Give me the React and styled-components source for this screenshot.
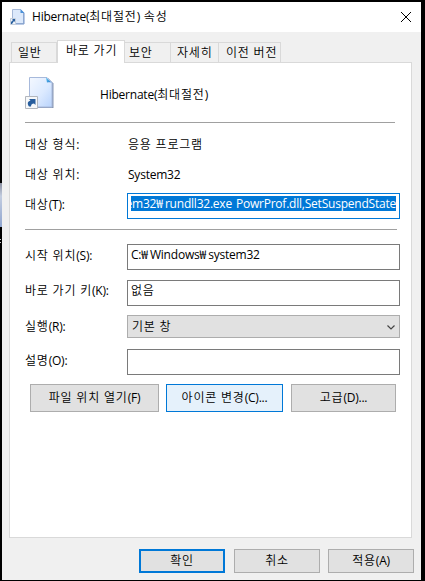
import React from "react";
import styled, { createGlobalStyle, css } from "styled-components";

const GlobalStyle = createGlobalStyle`
  *, *::before, *::after { box-sizing: border-box; }
  body { margin: 0; background: #000; overflow: hidden; }
  button, input { font: inherit; color: inherit; margin: 0; border-radius: 0; }
`;

const Desktop = styled.div`
  position: relative;
  width: 425px;
  height: 581px;
  padding: 2px 4px 1px 2px;
  background: #000;
  color: #000;
  font: 12px/16px "Open Sans", "Noto Sans CJK KR", sans-serif;
`;

const DesktopSliver = styled.div`
  position: absolute;
  left: 0;
  top: ${(p) => p.$top}px;
  width: ${(p) => p.$width}px;
  height: ${(p) => p.$height}px;
  background: ${(p) => p.$fill};
`;

const Window = styled.main`
  display: flex;
  flex-direction: column;
  height: 578px;
  background: #f0f0f0;
`;

const TitleBar = styled.header`
  display: flex;
  align-items: center;
  height: 30px;
  padding: 0 10px 0 8px;
  background: #fff;
`;

const TextLine = styled.span`
  display: inline-block;
  white-space: pre;
`;

const spacing = { hangul: 0.8, won: 2, latin: -0.22 };

const Run = styled.span`
  letter-spacing: ${(p) => spacing[p.$kind]}px;
  font-weight: ${(p) => (p.$kind === "hangul" ? 350 : 400)};
`;

/* Hangul is set wider than the Latin letters beside it. */
function Label({ children }) {
  const runs = children.match(/[\uac00-\ud7a3 ]+|₩|[^\uac00-\ud7a3₩ ]+/g) || [];
  return (
    <TextLine>
      {runs.map((run, i) => (
        <Run key={i} $kind={run === "₩" ? "won" : /[\uac00-\ud7a3 ]/.test(run) ? "hangul" : "latin"}>
          {run}
        </Run>
      ))}
    </TextLine>
  );
}

const Title = styled.h1`
  flex: 1;
  margin: 0 0 0 6px;
  font-size: 12px;
  font-weight: 400;
`;

const CloseButton = styled.button`
  display: flex;
  padding: 0;
  border: 0;
  background: none;
`;

const Tabs = styled.nav`
  display: flex;
  align-items: flex-end;
  height: 30px;
  padding-left: 9px;
`;

const Tab = styled.button`
  display: flex;
  align-items: flex-start;
  width: ${(p) => p.$width}px;
  height: 20px;
  padding: 2px 0 0 ${(p) => p.$pad}px;
  border: 1px solid #d9d9d9;
  border-width: 1px 1px 0 0;
  background: #f0f0f0;
  &:first-child { border-left-width: 1px; }
  ${(p) => p.$active && css`
    height: 23px;
    margin-bottom: -1px;
    border-left-width: 1px;
    background: #fff;
    z-index: 1;
  `}
`;

const Panel = styled.section`
  width: 403px;
  height: 476px;
  margin-left: 7px;
  padding: 13px 11px 0 15px;
  border: 1px solid #d9d9d9;
  background: #fff;
`;

const Identity = styled.div`
  display: flex;
  height: 46px;
  gap: 45px;
  line-height: 38px;
`;

const Rule = styled.hr`
  width: ${(p) => p.$width}px;
  height: 1px;
  margin: 0;
  border: 0;
  background: #a0a0a0;
`;

const Row = styled.div`
  display: grid;
  grid-template-columns: 102px 273px;
  align-items: start;
  height: ${(p) => p.$height}px;
`;

const Name = styled.div`
  padding-top: ${(p) => p.$top || 0}px;
`;

const Value = styled.div`
  padding-left: 1px;
`;

const Field = styled.div`
  display: flex;
  height: 26px;
  padding: ${(p) => (p.$top ?? 3)}px 3px 0;
  border: 1px solid ${(p) => (p.$focused ? "#0078d7" : "#7a7a7a")};
  background: #fff;
`;

const Selection = styled.div`
  display: flex;
  justify-content: flex-end;
  width: 265px;
  height: 15px;
  overflow: hidden;
  background: #0078d7;
  color: #fff;
  line-height: 16px;
`;

const Select = styled.div`
  display: flex;
  align-items: center;
  justify-content: space-between;
  height: 23px;
  padding: 1px 4px 0 4px;
  border: 1px solid #adadad;
  background: #e1e1e1;
`;

const Actions = styled.div`
  display: flex;
  padding: 0 0 0 5px;
`;

const Button = styled.button`
  display: flex;
  align-items: center;
  justify-content: center;
  width: ${(p) => p.$width}px;
  height: ${(p) => p.$height}px;
  margin-right: ${(p) => p.$gap || 0}px;
  padding: 0;
  border: 1px solid #adadad;
  background: #e1e1e1;
  ${(p) => p.$hot && css`border-color: #0078d7; background: #e5f1fb;`}
  ${(p) => p.$default && css`border: 2px solid #0078d7;`}
`;

const Footer = styled.footer`
  display: flex;
  padding: 11px 0 0 137px;
`;

function ShortcutIcon({ small }) {
  if (small) {
    return (
      <svg width="16" height="18" viewBox="0 0 16 18">
        <path d="M2.5 1.500h8l3 3v11h-11z" fill="#dce9fb" stroke="#a6b9d8" />
        <path d="M14 5v11H5" fill="none" stroke="#7796ca" />
        <path d="M10.500 1v4h4z" fill="#4b91d8" />
        <path d="M.5 10.500h5v6h-5z" fill="#eef3fa" stroke="#c4cedb" />
        <path d="M1 16v-2l2-2-1-1h3v3l-1-1-2 3z" fill="#285f9f" />
      </svg>
    );
  }
  return (
    <svg width="30" height="34" viewBox="0 0 30 34">
      <defs>
        <linearGradient id="page" x1="0" y1="0" x2="1" y2="1">
          <stop stopColor="#f4f8ff" />
          <stop offset=".55" stopColor="#dceaff" />
          <stop offset="1" stopColor="#b8d3fc" />
        </linearGradient>
        <linearGradient id="fold" x1="0" y1="0" x2="1" y2="1">
          <stop stopColor="#5ac8f8" />
          <stop offset="1" stopColor="#246bbf" />
        </linearGradient>
      </defs>
      <path d="M5 2h18l5.500 5.500V32H5z" fill="#8897b3" />
      <path d="M4.500 1.500h17.500l5 5v24.500h-22.500z" fill="url(#page)" stroke="#a7b9db" />
      <path d="M21 1.500l6.500 6c-1-1.500-3.500-1.500-5.500-1z" fill="url(#fold)" />
      <path d="M.5 20.500h12v12H.5z" fill="#f6f8fa" stroke="#b2b6bd" />
      <path d="M4 30.500c-2-3-1.500-5 1.500-6L4 23h6.500v6L9 27.500c-2 0-3 1-3 3z" fill="#275d9d" />
    </svg>
  );
}

export default function App() {
  return (
    <>
      <GlobalStyle />
      <Desktop>
        <DesktopSliver $top={183} $width={2} $height={44} $fill="linear-gradient(#8a8fa0, #c3cde0 30%, #8fa5cf)" />
        <DesktopSliver $top={239} $width={1} $height={6} $fill="repeating-linear-gradient(#ccc 0 1px, #000 1px 3px)" />
        <Window>
          <TitleBar>
            <ShortcutIcon small />
            <Title><Label>Hibernate(최대절전) 속성</Label></Title>
            <CloseButton aria-label="닫기">
              <svg width="10" height="10" viewBox="0 0 10 10">
                <path d="M0 0l10 10M10 0L0 10" stroke="#000" fill="none" />
              </svg>
            </CloseButton>
          </TitleBar>
          <Tabs>
            <Tab $width={46} $pad={6}><Label>일반</Label></Tab>
            <Tab $width={68} $pad={8} $active><Label>바로 가기</Label></Tab>
            <Tab $width={46} $pad={4}><Label>보안</Label></Tab>
            <Tab $width={48} $pad={6}><Label>자세히</Label></Tab>
            <Tab $width={62} $pad={7}><Label>이전 버전</Label></Tab>
          </Tabs>
          <Panel>
            <Identity>
              <ShortcutIcon />
              <Label>Hibernate(최대절전)</Label>
            </Identity>
            <Rule $width={370} />
            <Row $height={30}><Name $top={14}><Label>대상 형식:</Label></Name><Name $top={14}><Value><Label>응용 프로그램</Label></Value></Name></Row>
            <Row $height={40}><Name $top={14}><Label>대상 위치:</Label></Name><Name $top={14}><Value><Label>System32</Label></Value></Name></Row>
            <Row $height={36}>
              <Name $top={4}><Label>대상(T):</Label></Name>
              <Field $focused $top={2}><Selection><Label>em32₩rundll32.exe PowrProf.dll,SetSuspendState</Label></Selection></Field>
            </Row>
            <Rule $width={372} />
            <Row $height={14} />
            <Row $height={36}>
              <Name $top={4}><Label>시작 위치(S):</Label></Name>
              <Field $top={2}><Label>C:₩Windows₩system32</Label></Field>
            </Row>
            <Row $height={35}>
              <Name $top={3}><Label>바로 가기 키(K):</Label></Name>
              <Field $top={2}><Label>없음</Label></Field>
            </Row>
            <Row $height={34}>
              <Name $top={4}><Label>실행(R):</Label></Name>
              <Select>
                <Label>기본 창</Label>
                <svg width="8" height="5" viewBox="0 0 8 5"><path d="M.5.500L4 4 7.500.500" fill="none" stroke="#444" strokeWidth="1.200" /></svg>
              </Select>
            </Row>
            <Row $height={35}>
              <Name $top={4}><Label>설명(O):</Label></Name>
              <Field />
            </Row>
            <Actions>
              <Button $width={129} $height={28} $gap={7}><Label>파일 위치 열기(F)</Label></Button>
              <Button $width={117} $height={28} $gap={8} $hot><Label>아이콘 변경(C)...</Label></Button>
              <Button $width={105} $height={28}><Label>고급(D)...</Label></Button>
            </Actions>
          </Panel>
          <Footer>
            <Button $width={86} $height={24} $gap={9} $default><Label>확인</Label></Button>
            <Button $width={86} $height={24} $gap={8}><Label>취소</Label></Button>
            <Button $width={86} $height={24}><Label>적용(A)</Label></Button>
          </Footer>
        </Window>
      </Desktop>
    </>
  );
}
